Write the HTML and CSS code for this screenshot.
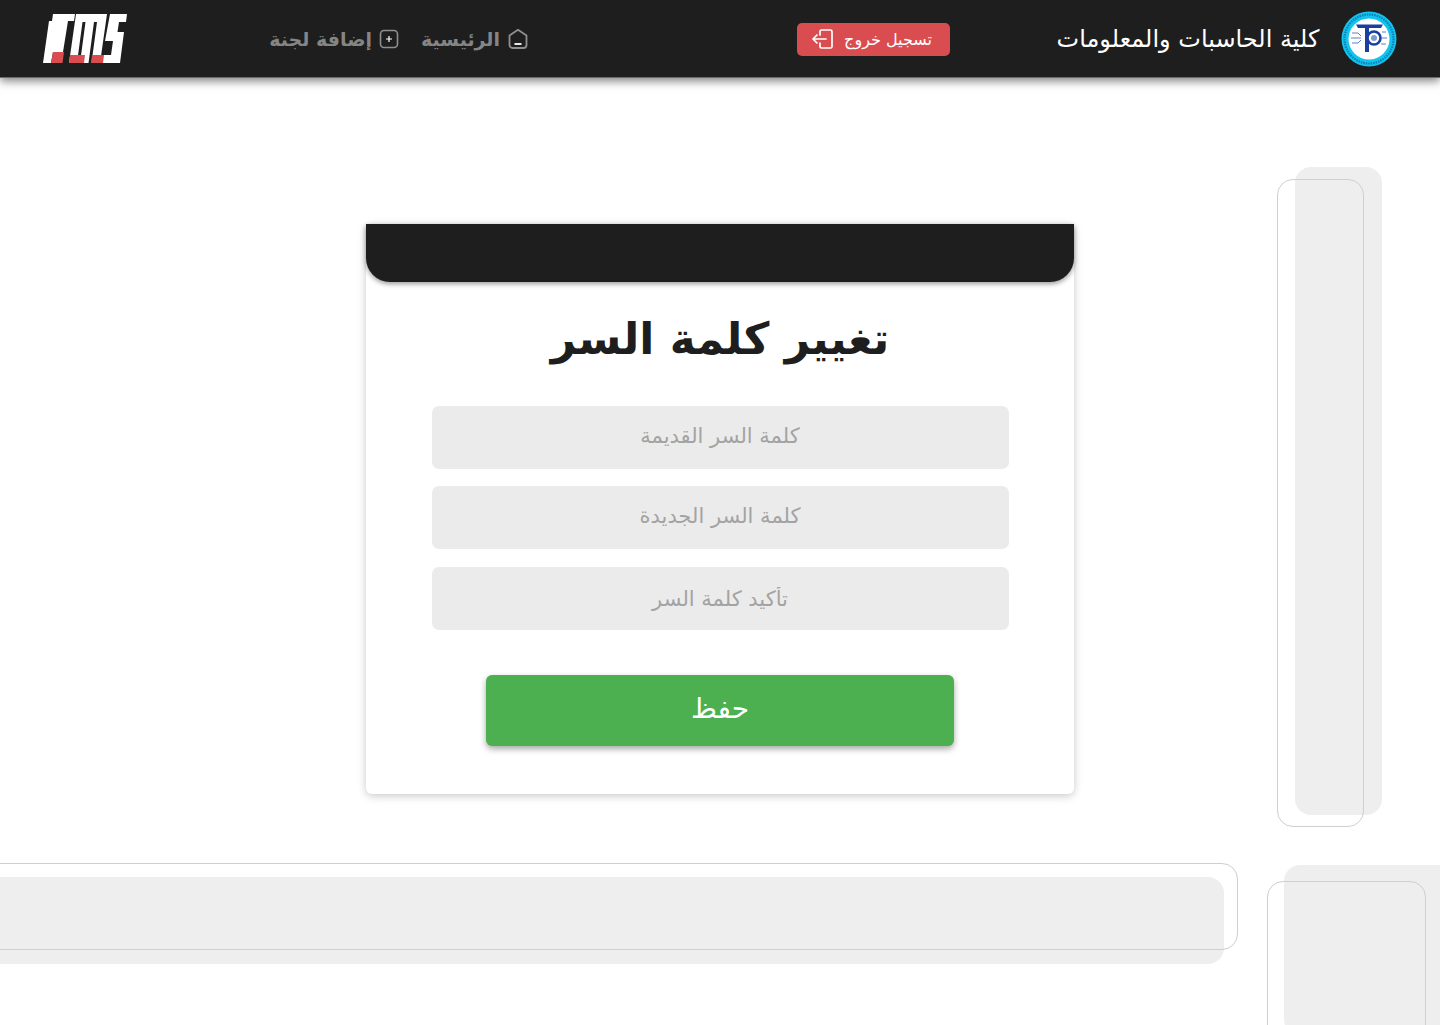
FILE: index.html
```html
<!DOCTYPE html>
<html lang="ar" dir="rtl">
<head>
<meta charset="utf-8">
<title>تغيير كلمة السر</title>
<link rel="stylesheet" href="styles.css">
</head>
<body>
<div class="decor" aria-hidden="true">
  <div class="fill f1"></div><div class="line l1"></div>
  <div class="fill f2"></div><div class="line l2"></div>
  <div class="fill f3"></div><div class="line l3"></div>
</div>
<header class="topbar">
  <div class="brand">
    <svg class="seal" viewBox="0 0 56 56" width="56" height="56">
      <circle cx="28" cy="28" r="27.500" fill="#12c3ee"/>
      <circle cx="28" cy="28" r="24.500" fill="none" stroke="#0b7fb4" stroke-width="2.200" stroke-dasharray="1.500 1"/>
      <circle cx="28" cy="28" r="20.500" fill="#fff"/>
      <path d="M15 13.500h27l-2 3.500H28v24h-4V17H17z" fill="#1b3f9e"/>
      <circle cx="33" cy="27" r="6.500" fill="#fff" stroke="#1b3f9e" stroke-width="2.600"/>
      <circle cx="33" cy="27" r="3" fill="#7d9bd0"/>
      <path d="M11 22h6l3 3M10 27h10M11 32h6l3-3M41 21h4M41 27h5M40 33h5" stroke="#5a7ec4" stroke-width="1" fill="none"/>
    </svg>
    <span class="college">كلية الحاسبات والمعلومات</span>
  </div>
  <a class="logout" href="#">
    <span>تسجيل خروج</span>
    <svg viewBox="0 0 24 24" width="24" height="24" fill="none" stroke="#fff" stroke-width="1.700" stroke-linecap="round" stroke-linejoin="round">
      <path d="M9 8V4.500A1.500 1.500 0 0 1 10.500 3h9A1.500 1.500 0 0 1 21 4.500v15a1.500 1.500 0 0 1-1.500 1.500h-9A1.500 1.500 0 0 1 9 19.500V16"/>
      <path d="M15 12H2M6 8l-4 4 4 4"/>
    </svg>
  </a>
  <nav class="nav">
    <a class="nav-link" href="#">
      <svg viewBox="0 0 22 22" width="22" height="22" fill="none" stroke="#8f8f8f" stroke-width="1.800" stroke-linejoin="round">
        <path d="M11 1.800 19.500 7.500V17a3 3 0 0 1-3 3h-11a3 3 0 0 1-3-3V7.500z"/>
        <path d="M7.500 16h7" stroke="#fff"/>
      </svg>
      <span>الرئيسية</span>
    </a>
    <a class="nav-link" href="#">
      <svg viewBox="0 0 20 20" width="20" height="20" fill="none" stroke="#8f8f8f" stroke-width="1.600">
        <rect x="1.500" y="1.500" width="17" height="17" rx="3.500"/>
        <path d="M10 7v6M7 10h6" stroke="#fff" stroke-width="1.200"/>
      </svg>
      <span>إضافة لجنة</span>
    </a>
  </nav>
  <svg class="ems" viewBox="0 0 84 50" width="84" height="50">
    <path d="M10 0H32L31 7H25L20 38H10L8 49H0L6 7H9Z" fill="#fff"/>
    <path d="M33 0H64L57 49H26Z" fill="#fff"/>
    <path d="M42.500 8 37 49h-3L39.500 8zM54 8 48.500 49h-3L51 8z" fill="#1e1e1e"/>
    <path d="M67 0H84L83 8H76L74.500 18H81L77 49H59L60 41H68L70 27H62Z" fill="#fff"/>
    <path d="M10 38H21L19.500 49H8ZM27 41H42L41 49H26ZM49 41H61L60 49H48Z" fill="#d94c4f"/>
  </svg>
</header>
<main class="page">
  <section class="card">
    <div class="card-cap"></div>
    <h1 class="title">تغيير كلمة السر</h1>
    <form class="form">
      <input class="field raised" type="password" placeholder="كلمة السر القديمة">
      <input class="field raised" type="password" placeholder="كلمة السر الجديدة">
      <input class="field" type="password" placeholder="تأكيد كلمة السر">
      <button class="save" type="button">حفظ</button>
    </form>
  </section>
</main>
</body>
</html>
```
FILE: styles.css
```css
* { box-sizing: border-box; }
html, body { margin: 0; height: 100%; }
body {
  position: relative;
  height: 1025px;
  overflow: hidden;
  background: #fff;
  color: #1e1e1e;
  font-family: "DejaVu Sans", "Noto Sans", sans-serif;
}
a { text-decoration: none; color: inherit; }

.decor { position: absolute; inset: 0; overflow: hidden; }
.fill { position: absolute; background: #eeeeee; border-radius: 16px; }
.line { position: absolute; border: 1px solid #cfcfcf; border-radius: 16px; }
.f1 { left: 1295px; top: 167px; width: 87px; height: 648px; }
.l1 { left: 1277px; top: 179px; width: 87px; height: 648px; }
.f2 { left: -40px; top: 877px; width: 1264px; height: 87px; }
.l2 { left: -40px; top: 863px; width: 1278px; height: 87px; }
.f3 { left: 1284px; top: 865px; width: 170px; height: 170px; }
.l3 { left: 1267px; top: 881px; width: 159px; height: 170px; }

.topbar {
  position: relative;
  z-index: 2;
  height: 78px;
  background: #1e1e1e;
  box-shadow: inset 0 -1px 0 #6b6b6b, 0 3px 9px rgba(0, 0, 0, 0.5);
  display: flex;
  align-items: center;
  padding: 0 43px 0 43px;
}
.brand { display: flex; align-items: center; gap: 19px; margin-left: 104px; }
.seal { display: block; }
.college { color: #fff; font-size: 24px; white-space: nowrap; width: 268px; text-align: center; }
.logout {
  display: flex;
  align-items: center;
  justify-content: center;
  gap: 9px;
  width: 153px;
  height: 33px;
  padding-right: 4px;
  background: #d94c4f;
  border-radius: 5px;
  color: #fff;
  font-size: 16px;
  white-space: nowrap;
}
.nav { display: flex; align-items: center; gap: 22px; margin-right: 268px; }
.nav-link {
  display: flex;
  align-items: center;
  gap: 7px;
  color: #858585;
  font-size: 19px;
  font-weight: 700;
  white-space: nowrap;
}
.ems { margin-right: auto; display: block; }

.page { position: relative; z-index: 1; display: flex; justify-content: center; padding-top: 146px; }
.card {
  width: 708px;
  height: 570px;
  background: #fff;
  border-radius: 6px;
  box-shadow: 0 2px 9px rgba(0, 0, 0, 0.22);
  display: flex;
  flex-direction: column;
  align-items: center;
}
.card-cap {
  align-self: stretch;
  height: 58px;
  background: #1e1e1e;
  border-radius: 0 0 24px 24px;
  box-shadow: 0 2px 5px rgba(0, 0, 0, 0.4);
}
.title {
  margin: 26px 0 0;
  height: 62px;
  font-size: 44px;
  line-height: 62px;
  font-weight: 700;
  color: #1e1e1e;
  white-space: nowrap;
}
.form { display: flex; flex-direction: column; align-items: center; margin-top: 36px; }
.field {
  width: 577px;
  height: 63px;
  margin-bottom: 18px;
  border: 0;
  border-radius: 7px;
  background: #ebebeb;
  text-align: center;
  font-family: inherit;
  font-size: 21px;
  outline: none;
}
.raised { padding-bottom: 5px; }
.field:nth-child(1) { margin-bottom: 17px; }
.field::placeholder { color: #a3a3a3; opacity: 1; }
.save {
  width: 468px;
  height: 71px;
  margin-top: 27px;
  border: 0;
  border-radius: 6px;
  background: #4caf50;
  box-shadow: 0 3px 6px rgba(0, 0, 0, 0.35);
  color: #fff;
  font-family: inherit;
  font-size: 28px;
  font-weight: 400;
  padding-bottom: 6px;
}
```
